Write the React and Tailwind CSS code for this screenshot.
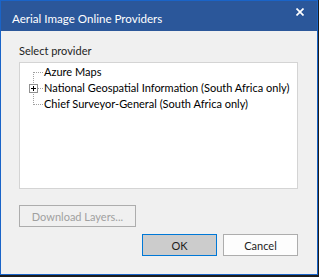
import { useState } from 'react'

const font = { fontFamily: 'Lato, "Noto Sans", Arial, sans-serif' }

function TreeLines() {
  // connectors + expander, local coords relative to tree box interior
  return (
    <svg className="absolute left-0 top-0" width="40" height="50" shapeRendering="crispEdges">
      <g stroke="#a0a0a0" strokeWidth="1" strokeDasharray="1 1">
        <line x1="13.5" y1="9" x2="13.5" y2="42" />
        <line x1="14" y1="9.5" x2="24" y2="9.5" />
        <line x1="18" y1="25.5" x2="24" y2="25.5" />
        <line x1="14" y1="41.5" x2="24" y2="41.5" />
      </g>
      <rect x="9.5" y="21.5" width="8" height="8" fill="#fff" stroke="#919191" />
      <line x1="11" y1="25.5" x2="16" y2="25.5" stroke="#000" />
      <line x1="13.5" y1="23" x2="13.5" y2="28" stroke="#000" />
    </svg>
  )
}

export default function App() {
  const [selected] = useState(null)
  const providers = [
    'Azure Maps',
    'National Geospatial Information (South Africa only)',
    'Chief Surveyor-General (South Africa only)',
  ]

  return (
    <div className="w-[319px] h-[277px] bg-[#1c1c1c]" style={font}>
      <div className="w-[318px] h-[275px] flex flex-col bg-[#f0f0f0] border border-[#1a64c8]">
        {/* Title bar */}
        <div className="h-[30px] bg-[#2b579a] flex items-start justify-between pl-[11px] pr-[13px] shrink-0">
          <span className="mt-[11px] text-white text-[11.6px] leading-[14px]">Aerial Image Online Providers</span>
          <svg className="mt-[7px]" width="8" height="8" viewBox="0 0 8 8">
            <path d="M0.5 0.5 L7.5 7.5 M7.5 0.5 L0.5 7.5" stroke="#fff" strokeWidth="1.7" />
          </svg>
        </div>

        <div className="flex flex-col px-[18px] pt-[12px]">
          <div className="text-[11px] leading-[16px] text-[#1e1e1e]">Select provider</div>

          <div className="relative mt-[3px] w-[279px] h-[127px] bg-white border border-[#d4d4d4] pt-[1px]">
            <TreeLines />
            {providers.map((p, i) => (
              <div
                key={p}
                className={`ml-[24px] h-[16px] leading-[16px] text-[11px] whitespace-nowrap ${selected === i ? 'bg-[#cce8ff]' : ''} text-[#000]`}
              >
                {p}
              </div>
            ))}
          </div>

          <button className="mt-[16px] w-[117px] h-[22px] border border-[#adadad] bg-[#f0f0f0] text-[11px] text-[#a0a0a0] leading-none">
            Download Layers...
          </button>

          <div className="mt-[7px] flex justify-end gap-[6px] pr-[1px]">
            <button className="w-[75px] h-[22px] border border-[#0078d7] bg-[#cccccc] text-[11px] text-[#1e1e1e] leading-none">
              OK
            </button>
            <button className="w-[75px] h-[22px] border border-[#adadad] bg-[#fdfdfd] text-[11px] text-[#1e1e1e] leading-none">
              Cancel
            </button>
          </div>
        </div>
      </div>
    </div>
  )
}
